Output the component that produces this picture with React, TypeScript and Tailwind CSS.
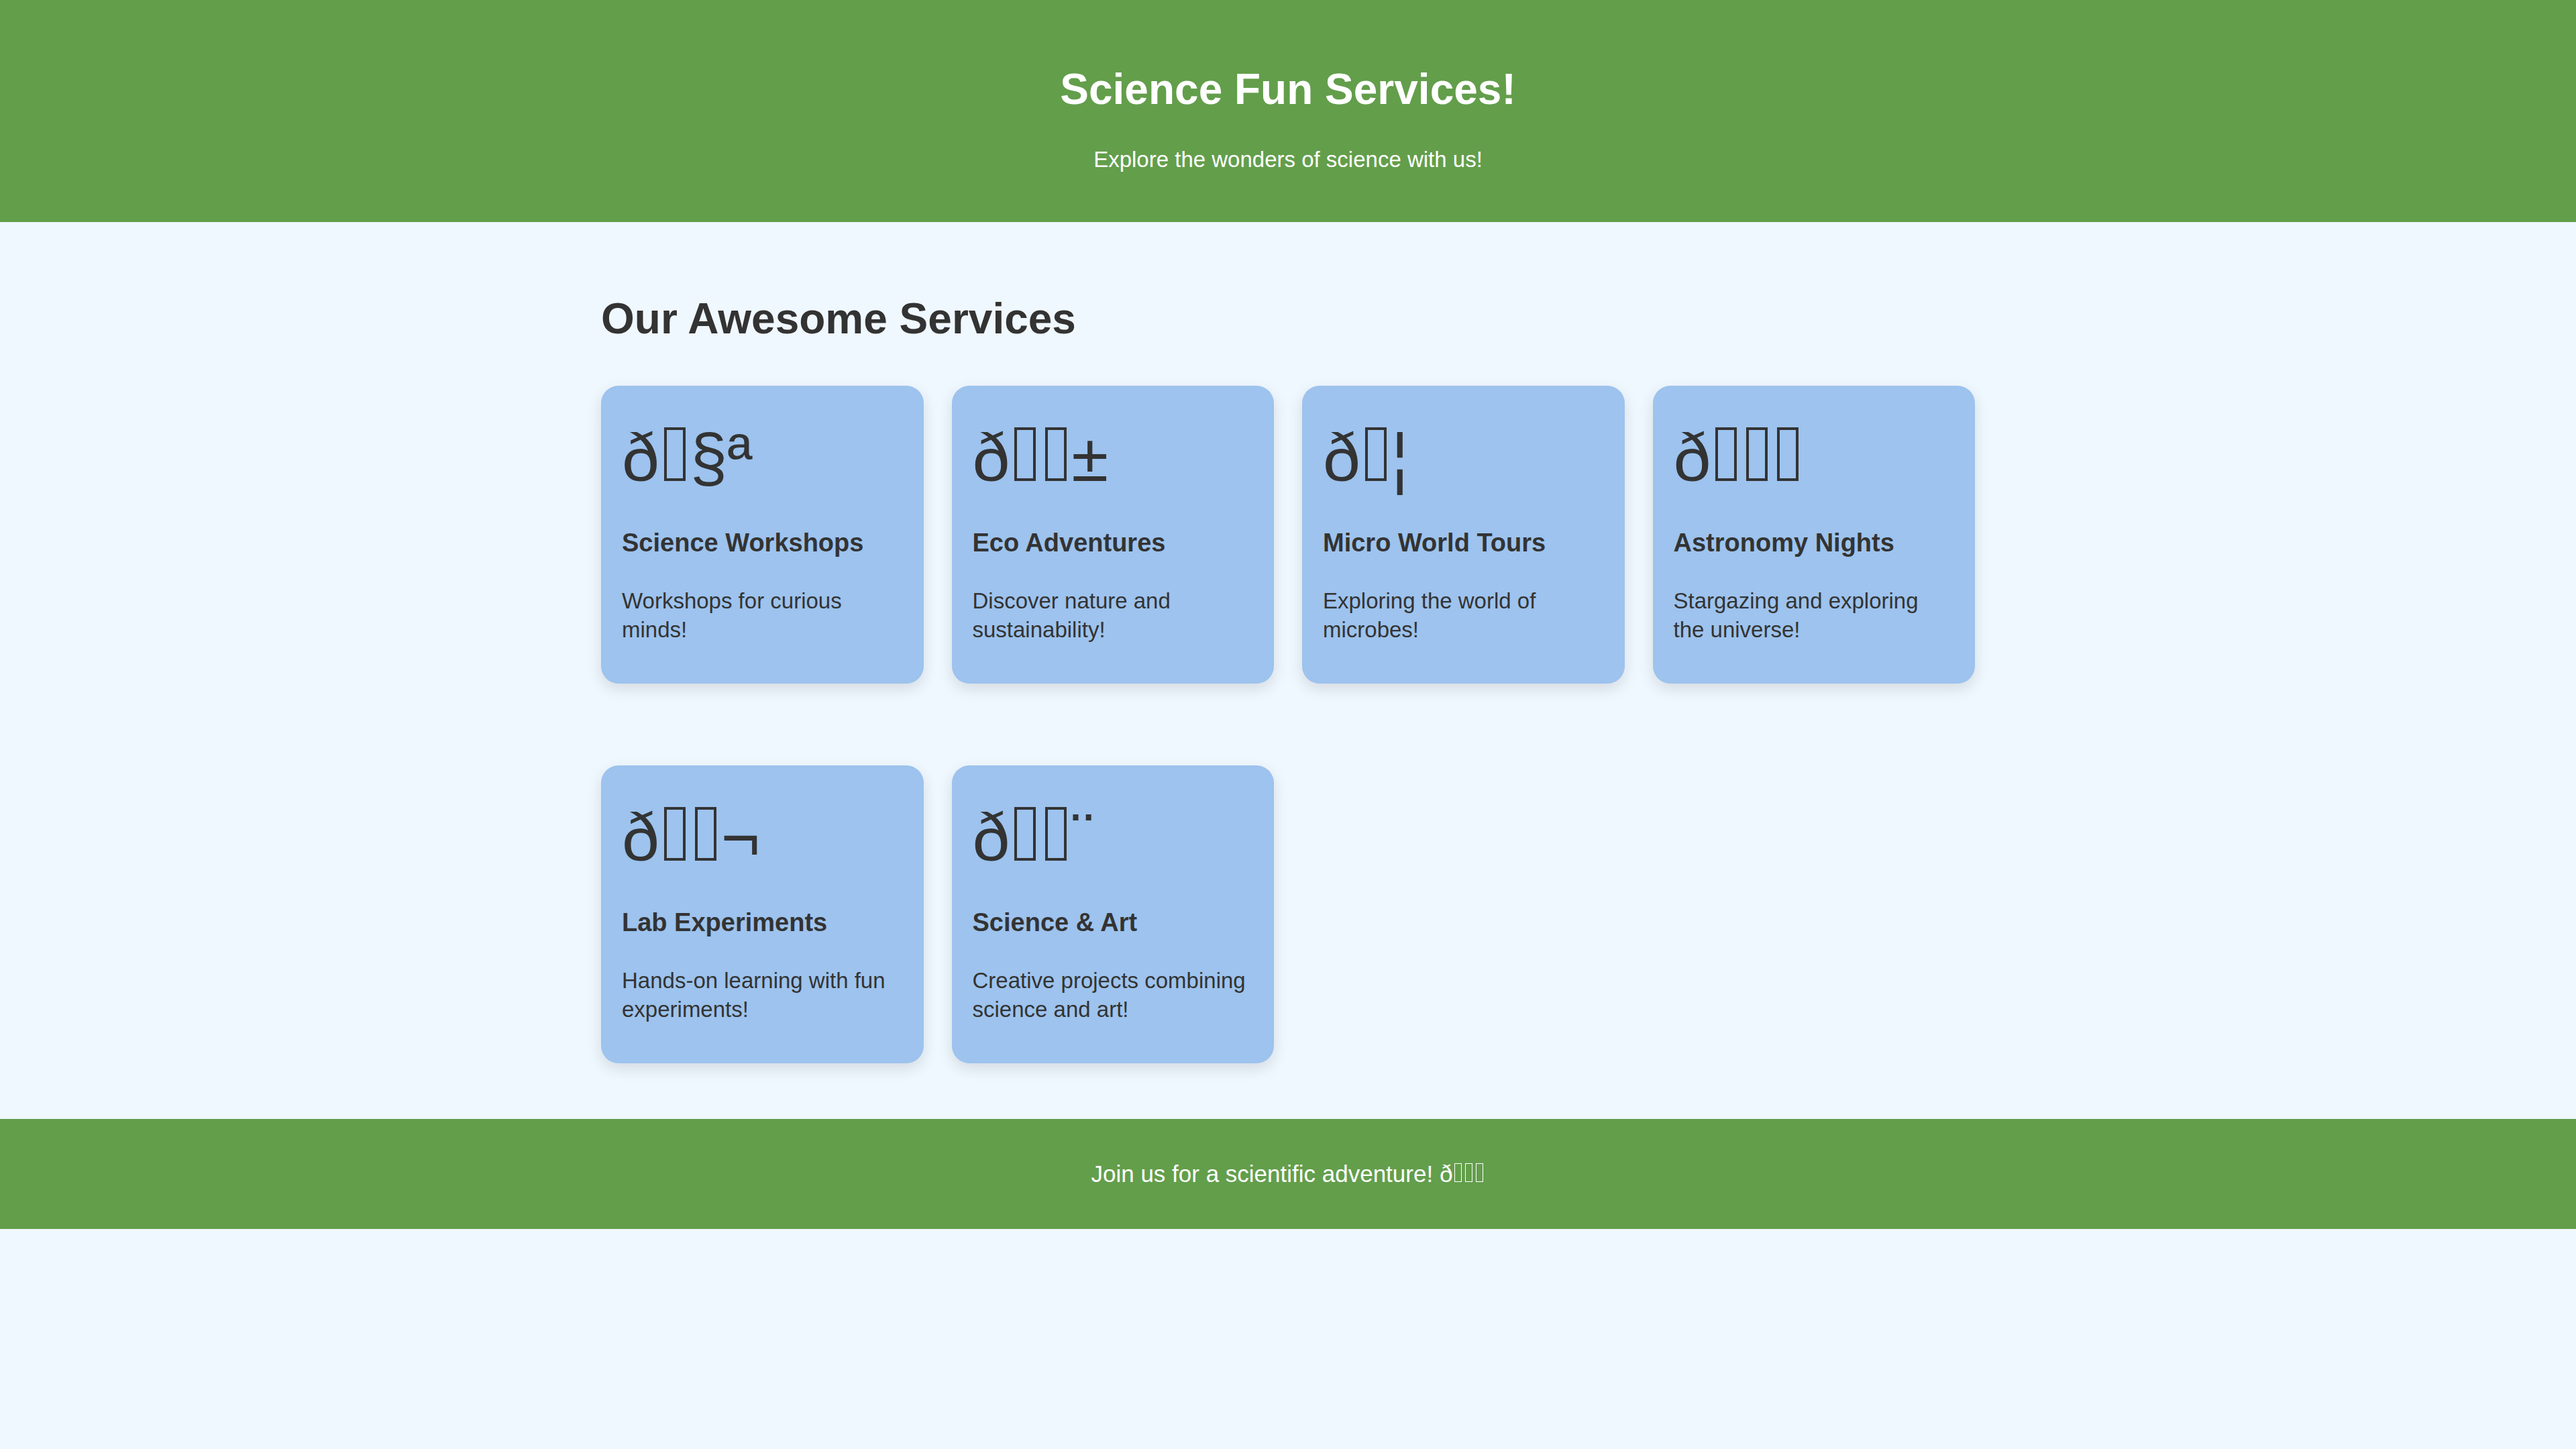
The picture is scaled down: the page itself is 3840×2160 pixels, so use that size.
// "#" marks a byte that the original page showed as an empty box
const services = [
  { icon: "ð#§ª", title: "Science Workshops", text: "Workshops for curious minds!" },
  { icon: "ð##±", title: "Eco Adventures", text: "Discover nature and sustainability!" },
  { icon: "ð#¦", title: "Micro World Tours", text: "Exploring the world of microbes!" },
  { icon: "ð###", title: "Astronomy Nights", text: "Stargazing and exploring the universe!" },
  { icon: "ð##¬", title: "Lab Experiments", text: "Hands-on learning with fun experiments!" },
  { icon: "ð##¨", title: "Science & Art", text: "Creative projects combining science and art!" },
];

function Garbled({ value }: { value: string }) {
  return (
    <>
      {value.split("").map((c, i) =>
        c === "#" ? (
          <span
            key={i}
            className="mx-[0.07em] inline-block h-[0.8em] w-[0.32em] border-[0.04em] border-current align-baseline"
          />
        ) : (
          <span key={i}>{c}</span>
        )
      )}
    </>
  );
}

function ServiceCard({ icon, title, text }: { icon: string; title: string; text: string }) {
  return (
    <div className="rounded-[26px] bg-[#9dc3ee] p-[31px] pb-[59px] shadow-[0_8px_22px_rgba(0,0,0,0.12)]">
      <div className="text-[100px] leading-[152px]">
        <Garbled value={icon} />
      </div>
      <h3 className="mt-[27px] text-[38px] font-bold leading-[48px]">{title}</h3>
      <p className="mt-[41px] text-[33px] leading-[43px]">{text}</p>
    </div>
  );
}

export default function App() {
  return (
    <div className="min-h-screen bg-[#f0f8ff] font-['Liberation_Sans',Arial,sans-serif] text-[#333]">
      <header className="bg-[#639e4b] pt-[93px] pb-[73px] text-center text-white">
        <h1 className="text-[64px] font-bold leading-[80px]">Science Fun Services!</h1>
        <p className="mt-[45px] text-[33px] leading-[40px]">Explore the wonders of science with us!</p>
      </header>

      <main className="mx-auto max-w-[2048px] pt-[104px] pb-[83px]">
        <h2 className="mb-[60px] text-[64px] font-bold leading-[80px]">Our Awesome Services</h2>
        <div className="grid grid-cols-4 gap-x-[42px] gap-y-[122px]">
          {services.map((s) => (
            <ServiceCard key={s.title} {...s} />
          ))}
        </div>
      </main>

      <footer className="bg-[#639e4b] py-[62px] text-center text-[35px] leading-[40px] text-white">
        Join us for a scientific adventure! <Garbled value="ð###" />
      </footer>
    </div>
  );
}
